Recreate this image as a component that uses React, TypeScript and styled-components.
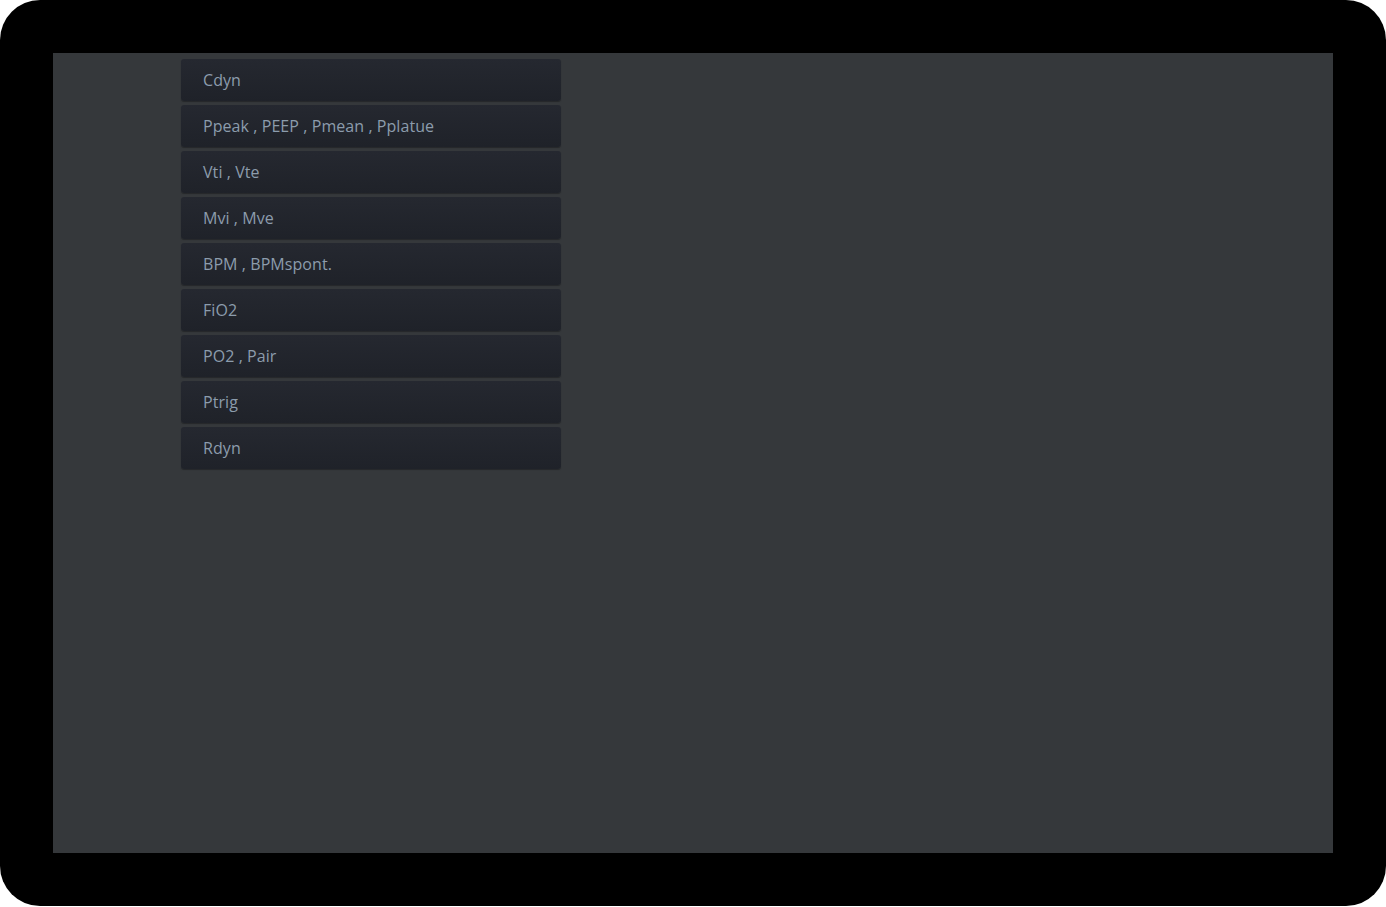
import React from "react";
import styled, { createGlobalStyle } from "styled-components";

const Global = createGlobalStyle`
  html, body { margin: 0; padding: 0; background: #ffffff; }
  * { box-sizing: border-box; }
`;

const Frame = styled.div`
  width: 1386px;
  height: 906px;
  background: #000000;
  border-radius: 40px;
  padding: 53px;
`;

const Screen = styled.div`
  width: 1280px;
  height: 800px;
  background: #35383b;
  padding: 6px 0 0 128px;
`;

const List = styled.div`
  display: flex;
  flex-direction: column;
  gap: 4px;
  width: 380px;
`;

const Item = styled.button`
  height: 42px;
  width: 100%;
  display: flex;
  align-items: center;
  padding: 0 0 0 22px;
  border: none;
  border-radius: 3px;
  background: linear-gradient(#252830, #1f2229);
  box-shadow: 0 1px 1px rgba(0, 0, 0, 0.3);
  color: #8c9cac;
  font-family: "Open Sans", "Noto Sans", sans-serif;
  font-size: 16px;
  letter-spacing: 0.07px;
  text-align: left;
  cursor: pointer;
`;

const items = [
  "Cdyn",
  "Ppeak , PEEP , Pmean , Pplatue",
  "Vti , Vte",
  "Mvi , Mve",
  "BPM , BPMspont.",
  "FiO2",
  "PO2 , Pair",
  "Ptrig",
  "Rdyn",
];

export default function App() {
  return (
    <>
      <Global />
      <Frame>
        <Screen>
          <List>
            {items.map((t) => (
              <Item key={t}>{t}</Item>
            ))}
          </List>
        </Screen>
      </Frame>
    </>
  );
}
